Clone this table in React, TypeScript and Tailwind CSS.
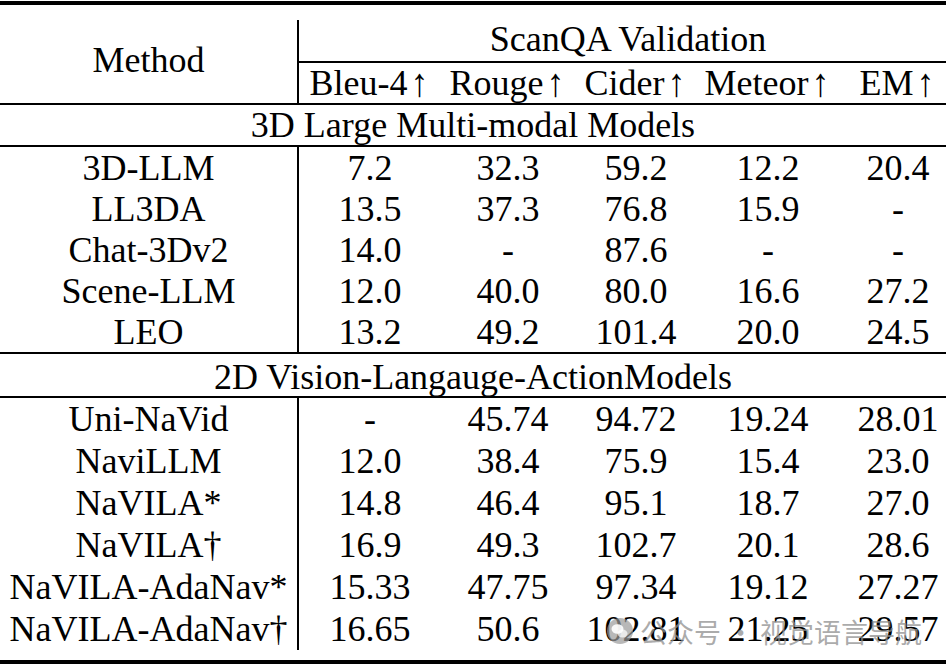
import React from 'react';

type Row = [string, string, string, string, string, string];

const cols = 'grid grid-cols-[299px_142px_134px_122px_142px_118px]';

const llm3d: Row[] = [
  ['3D-LLM', '7.2', '32.3', '59.2', '12.2', '20.4'],
  ['LL3DA', '13.5', '37.3', '76.8', '15.9', '-'],
  ['Chat-3Dv2', '14.0', '-', '87.6', '-', '-'],
  ['Scene-LLM', '12.0', '40.0', '80.0', '16.6', '27.2'],
  ['LEO', '13.2', '49.2', '101.4', '20.0', '24.5'],
];

const vla2d: Row[] = [
  ['Uni-NaVid', '-', '45.74', '94.72', '19.24', '28.01'],
  ['NaviLLM', '12.0', '38.4', '75.9', '15.4', '23.0'],
  ['NaVILA*', '14.8', '46.4', '95.1', '18.7', '27.0'],
  ['NaVILA†', '16.9', '49.3', '102.7', '20.1', '28.6'],
  ['NaVILA-AdaNav*', '15.33', '47.75', '97.34', '19.12', '27.27'],
  ['NaVILA-AdaNav†', '16.65', '50.6', '102.81', '21.25', '29.57'],
];

const metrics = ['Bleu-4', 'Rouge', 'Cider', 'Meteor', 'EM'];

const DataRow = ({ row, h }: { row: Row; h: string }) => (
  <div className={cols}>
    <div className={`${h} border-r-2 border-black flex items-center justify-center`}>
      {row[0]}
    </div>
    {row.slice(1).map((v, i) => (
      <div key={i} className={`${h} flex items-center justify-center`}>
        {v}
      </div>
    ))}
  </div>
);

// wechat account stamp over the last row
const Watermark = () => (
  <div className="absolute left-[606px] top-[617px] flex items-center gap-[6px] text-[27px] leading-none text-[#8f8f8f]/75 font-[Noto_Sans_CJK_SC] pointer-events-none">
    <svg width="28" height="28" viewBox="0 0 28 28">
      <circle cx="14" cy="14" r="13" fill="#9a9a9a" fillOpacity="0.7" />
      <ellipse cx="11.5" cy="12" rx="6" ry="4.8" fill="#fff" fillOpacity="0.9" />
      <ellipse cx="16.5" cy="16.5" rx="5" ry="4" fill="#fff" fillOpacity="0.7" />
    </svg>
    <span>公众号 · 视觉语言导航</span>
  </div>
);

export default function App() {
  return (
    <div className="relative w-[946px] h-[671px] overflow-hidden bg-white text-black text-[36px] leading-none font-[Liberation_Serif]">
      <div className="h-px" />
      <div className="h-[4px] bg-black" />
      <div className="h-[15px]" />

      <div className={`${cols} border-b-2 border-black`}>
        <div className="row-span-2 border-r-2 border-black flex items-center justify-center pb-[3px]">
          Method
        </div>
        <div className="col-span-5 h-[43px] border-b-2 border-black flex items-center justify-center pb-[3px]">
          ScanQA Validation
        </div>
        {metrics.map(m => (
          <div key={m} className="h-[40px] flex items-center justify-center">
            {m}
            <span className="ml-[3px] mr-[2px] scale-y-110">↑</span>
          </div>
        ))}
      </div>

      <div className="h-[42px] border-b-2 border-black flex items-center justify-center">
        3D Large Multi-modal Models
      </div>
      {llm3d.map(r => (
        <DataRow key={r[0]} row={r} h="h-[41px]" />
      ))}

      <div className="h-[46px] border-y-2 border-black flex items-center justify-center pt-[3px]">
        2D Vision-Langauge-ActionModels
      </div>
      {vla2d.map(r => (
        <DataRow key={r[0]} row={r} h="h-[42px]" />
      ))}

      <div className="h-[10px]" />
      <div className="h-[4px] bg-black" />

      <Watermark />
    </div>
  );
}
